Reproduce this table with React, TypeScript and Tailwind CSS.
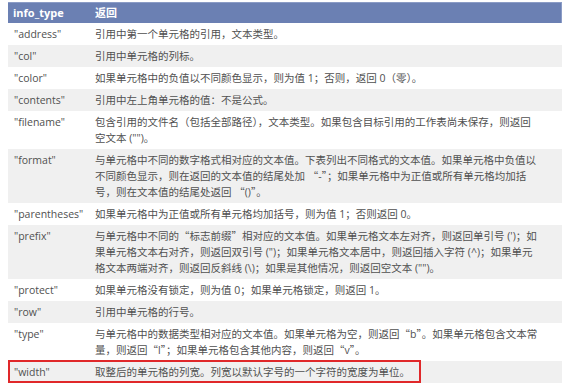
import React from "react";

type Row = { key: string; lines: string[]; gray: boolean; mark?: boolean };

const rows: Row[] = [
  { key: '"address"', lines: ["引用中第一个单元格的引用，文本类型。"], gray: false },
  { key: '"col"', lines: ["引用中单元格的列标。"], gray: true },
  { key: '"color"', lines: ["如果单元格中的负值以不同颜色显示，则为值 1；否则，返回 0（零）。"], gray: false },
  { key: '"contents"', lines: ["引用中左上角单元格的值：不是公式。"], gray: true },
  {
    key: '"filename"',
    lines: ["包含引用的文件名（包括全部路径），文本类型。如果包含目标引用的工作表尚未保存，则返回", '空文本 ("")。'],
    gray: false,
  },
  {
    key: '"format"',
    lines: [
      "与单元格中不同的数字格式相对应的文本值。下表列出不同格式的文本值。如果单元格中负值以",
      "不同颜色显示，则在返回的文本值的结尾处加 “-”；如果单元格中为正值或所有单元格均加括",
      "号，则在文本值的结尾处返回 “()”。",
    ],
    gray: true,
  },
  { key: '"parentheses"', lines: ["如果单元格中为正值或所有单元格均加括号，则为值 1；否则返回 0。"], gray: false },
  {
    key: '"prefix"',
    lines: [
      "与单元格中不同的“标志前缀”相对应的文本值。如果单元格文本左对齐，则返回单引号 (')；如",
      '果单元格文本右对齐，则返回双引号 (")；如果单元格文本居中，则返回插入字符 (^)；如果单元',
      '格文本两端对齐，则返回反斜线 (\\)；如果是其他情况，则返回空文本 ("")。',
    ],
    gray: true,
  },
  { key: '"protect"', lines: ["如果单元格没有锁定，则为值 0；如果单元格锁定，则返回 1。"], gray: false },
  { key: '"row"', lines: ["引用中单元格的行号。"], gray: true },
  {
    key: '"type"',
    lines: [
      "与单元格中的数据类型相对应的文本值。如果单元格为空，则返回“b”。如果单元格包含文本常",
      "量，则返回“l”；如果单元格包含其他内容，则返回“v”。",
    ],
    gray: false,
  },
  { key: '"width"', lines: ["取整后的单元格的列宽。列宽以默认字号的一个字符的宽度为单位。"], gray: true, mark: true },
];

function Line({ text }: { text: string }) {
  const parts = text.split(/([“”])/);
  return (
    <div className="whitespace-nowrap">
      {parts.map((p, i) =>
        p === "“" || p === "”" ? (
          <span key={i} style={{ fontFamily: '"Noto Sans CJK SC", sans-serif' }}>
            {p}
          </span>
        ) : (
          <React.Fragment key={i}>{p}</React.Fragment>
        )
      )}
    </div>
  );
}

export default function App() {
  return (
    <div
      className="w-[576px] h-[386px] bg-white pt-[2px] pl-[8px] overflow-hidden"
      style={{ fontFamily: '"Open Sans", "Noto Sans CJK SC", sans-serif' }}
    >
      <div className="w-[554px] flex flex-col text-[10.5px] leading-[16px] text-[#505050]">
        <div className="flex h-[21px] items-center bg-[#6b80b3] border-t border-r border-[#8b9cc6] text-white font-bold text-[11px]">
          <div className="w-[82px] pl-[5px]">info_type</div>
          <div className="pl-[5px]">返回</div>
        </div>
        {rows.map((r) => (
          <div
            key={r.key}
            className={`relative flex py-[3px] ${r.gray ? "bg-[#f0f0f0]" : "bg-white"}`}
          >
            <div className="w-[82px] pl-[6px] whitespace-nowrap">{r.key}</div>
            <div className="flex flex-col pl-[5px]">
              {r.lines.map((l, i) => (
                <Line key={i} text={l} />
              ))}
            </div>
            {r.mark && (
              <div className="absolute left-0 top-[-1px] w-[413px] h-[23px] border-2 border-[#e0282a]" />
            )}
          </div>
        ))}
      </div>
    </div>
  );
}
